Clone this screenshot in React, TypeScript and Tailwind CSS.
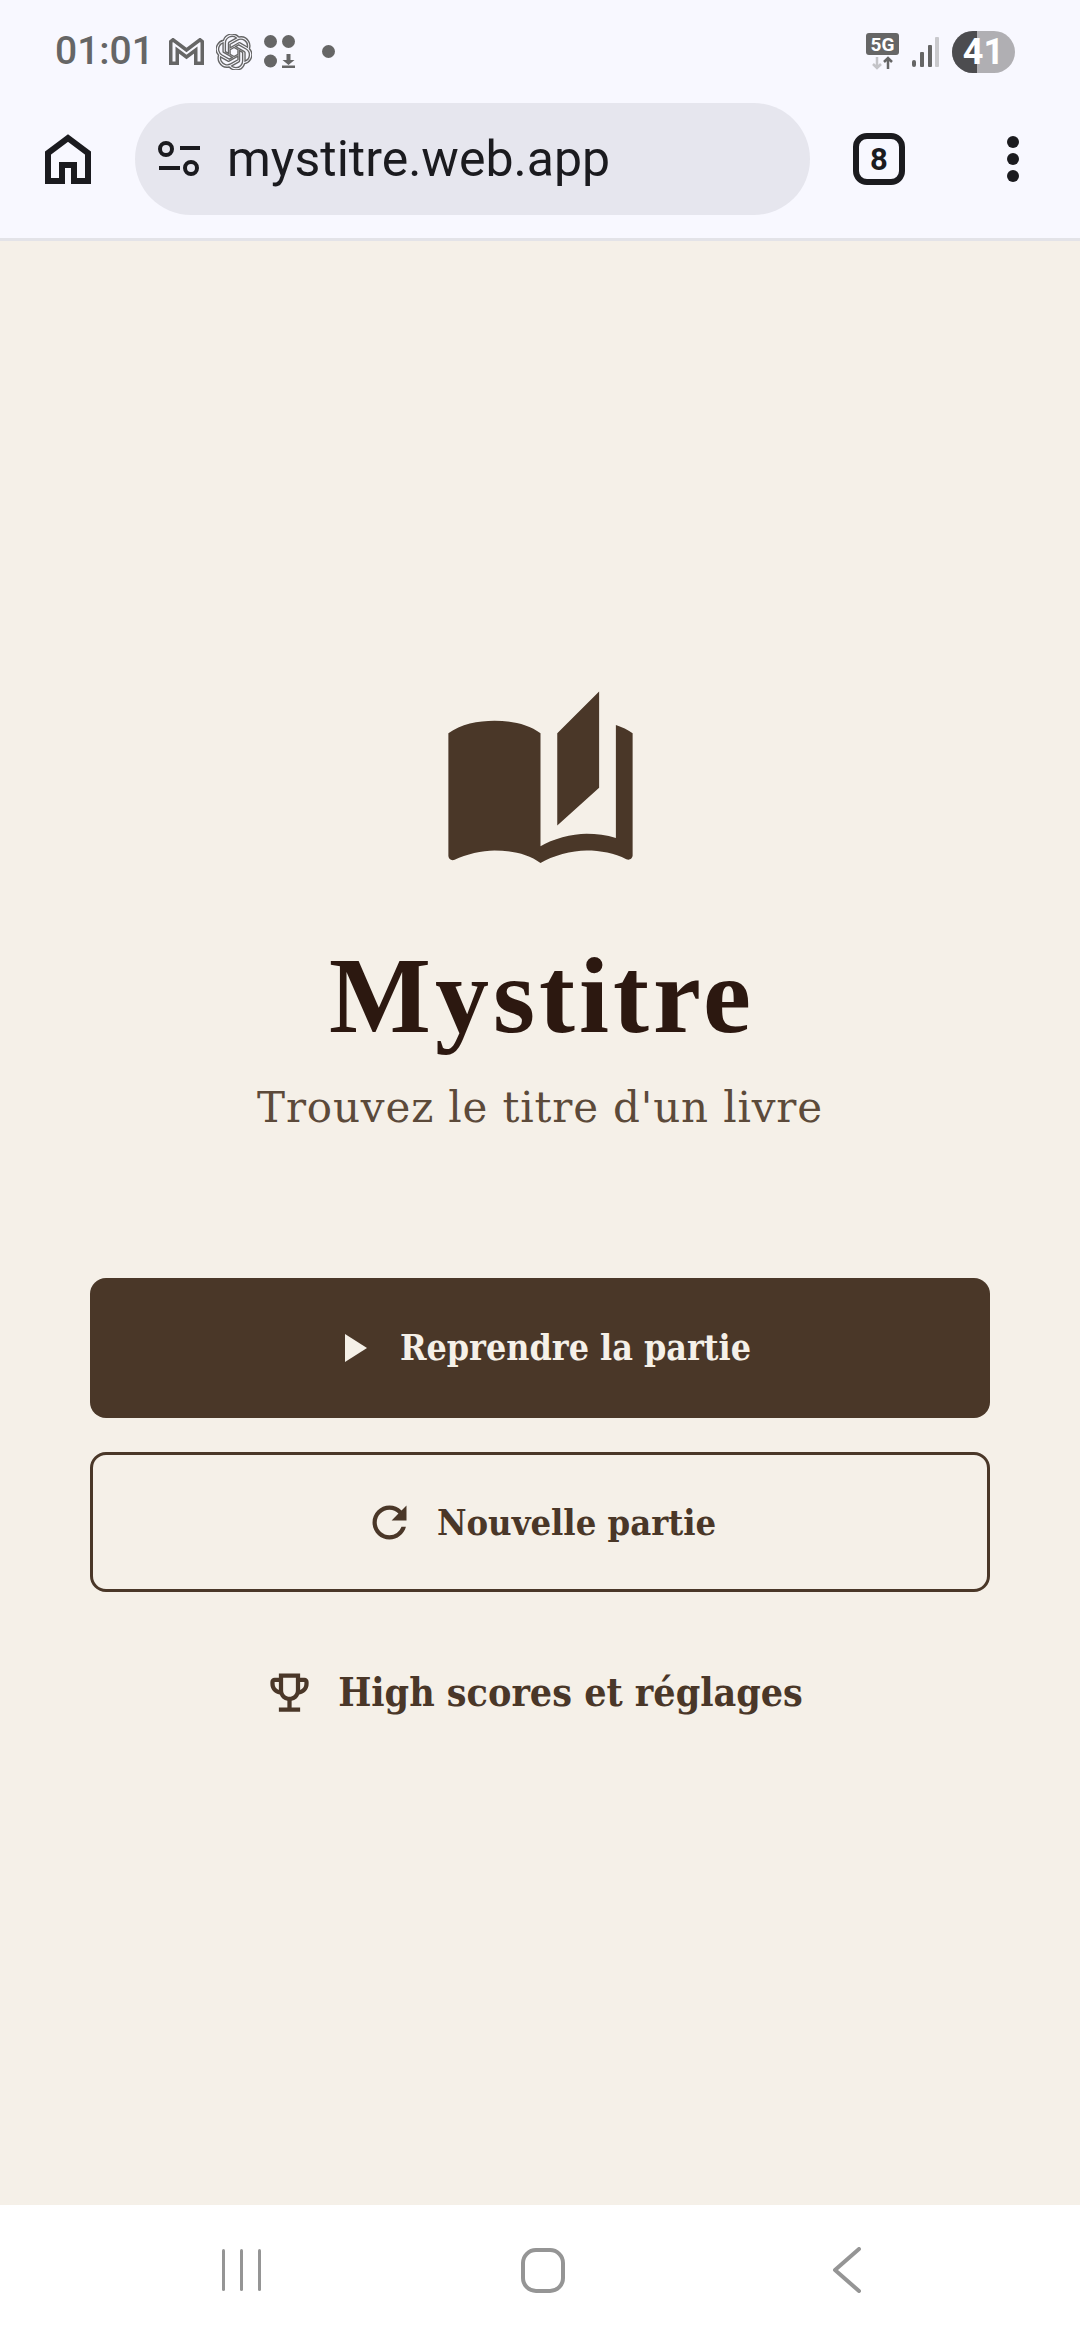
import { MdAutoStories, MdOutlineEmojiEvents, MdPlayArrow, MdRefresh } from 'react-icons/md';
import { SiOpenai } from 'react-icons/si';

function HomeIcon() {
  return (
    <svg width="46" height="50" viewBox="0 0 46 50" fill="none" stroke="#1b1b1f" strokeWidth="6">
      <path d="M3 47V19L23 4l20 15v28H29V31H17v16Z" />
    </svg>
  );
}

function TuneIcon() {
  return (
    <svg width="42" height="36" viewBox="0 0 42 36" fill="none" stroke="#1b1b1f" strokeWidth="4">
      <circle cx="8" cy="8" r="6" />
      <path d="M22 7h20M1 27h21" />
      <circle cx="33" cy="27" r="6" />
    </svg>
  );
}

function GmailIcon() {
  return (
    <svg width="35" height="27" viewBox="0 0 35 27" fill="none" stroke="#666" strokeWidth="3.5">
      <path d="M1.75 25.25V3.5L4 1.75 17.5 12 31 1.75l2.25 1.75v21.75h-6.5V12l-9.25 7-9.25-7v13.25Z" />
    </svg>
  );
}

function AppsDownloadIcon() {
  return (
    <svg width="31" height="33" viewBox="0 0 31 33" fill="#666">
      <circle cx="6.5" cy="6.5" r="6.5" />
      <circle cx="24.5" cy="6.5" r="6.5" />
      <circle cx="6.5" cy="26" r="6.5" />
      <path d="M22.5 19h4v6h4l-6 5-6-5h4Z" />
      <rect x="18" y="30.5" width="13" height="2.5" />
    </svg>
  );
}

function NetworkIcon() {
  return (
    <svg width="33" height="37" viewBox="0 0 33 37" fill="none">
      <rect width="33" height="22" rx="3" fill="#666" />
      <text x="16.5" y="18" textAnchor="middle" fill="#fff" fontSize="19" fontWeight="700" fontFamily="Roboto, sans-serif">
        5G
      </text>
      <path d="M11 24v11M7 31l4 4 4-4" stroke="#c4c4c8" strokeWidth="2.5" />
      <path d="M22 36V25M18 29l4-4 4 4" stroke="#666" strokeWidth="2.5" />
    </svg>
  );
}

function SignalIcon() {
  return (
    <svg width="27" height="30" viewBox="0 0 27 30" fill="#666">
      <rect x="0" y="23" width="4" height="7" rx="2" />
      <rect x="8" y="15" width="4" height="15" rx="1" />
      <rect x="16" y="8" width="4" height="22" rx="1" />
      <rect x="23" y="0" width="4" height="30" rx="1" fill="#c9c9cd" />
    </svg>
  );
}

export default function App() {
  return (
    <div className="flex min-h-[2340px] w-[1080px] flex-col bg-[#f5f0e8] font-['Roboto',sans-serif]">
      <header className="h-[241px] border-b-[3px] border-[#e3e3e8] bg-[#f8f8ff]">
        <div className="flex h-[103px] items-center pl-[55px] pr-[65px] text-[#666]">
          <span className="text-[39px] font-medium leading-none">01:01</span>
          <div className="ml-[15px] flex items-center gap-[12px]">
            <GmailIcon />
            <SiOpenai className="h-[36px] w-[36px] fill-none stroke-[#666] stroke-[0.9]" />
            <AppsDownloadIcon />
          </div>
          <span className="ml-[27px] h-[13px] w-[13px] rounded-full bg-[#666]" />
          <div className="ml-auto flex items-center gap-[13px]">
            <NetworkIcon />
            <SignalIcon />
            <div className="relative flex h-[42px] w-[63px] items-center justify-center overflow-hidden rounded-full bg-[#b0afb3] text-[36px] font-bold text-white">
              <span className="absolute inset-y-0 left-0 w-[25px] bg-[#4c4c4f]" />
              <span className="relative leading-none">41</span>
            </div>
          </div>
        </div>
        <div className="flex h-[112px] items-center pl-[45px]">
          <HomeIcon />
          <div className="ml-[44px] flex h-[112px] w-[675px] items-center rounded-full bg-[#e6e6ee] pl-[23px]">
            <TuneIcon />
            <span className="ml-[27px] text-[50px] leading-none text-[#1b1b1f]">mystitre.web.app</span>
          </div>
          <div className="ml-[43px] flex h-[52px] w-[52px] items-center justify-center rounded-[14px] border-[6px] border-[#1b1b1f] text-[31px] font-bold leading-none text-[#1b1b1f]">
            8
          </div>
          <div className="ml-[102px] flex flex-col gap-[5px]">
            <span className="h-[12px] w-[12px] rounded-full bg-[#1b1b1f]" />
            <span className="h-[12px] w-[12px] rounded-full bg-[#1b1b1f]" />
            <span className="h-[12px] w-[12px] rounded-full bg-[#1b1b1f]" />
          </div>
        </div>
      </header>

      <main className="flex flex-1 flex-col items-center px-[90px] pt-[442px]">
        <MdAutoStories className="h-[201px] w-[201px] text-[#4a3728]" />
        <h1 className="ml-[4px] mt-[52px] font-['Liberation_Serif',serif] text-[108px] font-bold leading-[120px] tracking-[4px] text-[#2c1810]">
          Mystitre
        </h1>
        <p className="mt-[22px] font-['DejaVu_Serif',serif] text-[42px] leading-[60px] tracking-[0.85px] text-[#5c4a3a]">
          Trouvez le titre d'un livre
        </p>
        <button className="mt-[140px] flex h-[140px] w-full items-center justify-center gap-[23px] rounded-[16px] bg-[#4a3728] font-['DejaVu_Serif_Condensed','DejaVu_Serif',serif] text-[35.5px] font-bold text-[#f5f0e8]">
          <MdPlayArrow className="h-[48px] w-[48px]" />
          Reprendre la partie
        </button>
        <button className="mt-[34px] flex h-[140px] w-full items-center justify-center gap-[22px] rounded-[16px] border-[3px] border-[#4a3728] font-['DejaVu_Serif_Condensed','DejaVu_Serif',serif] text-[36px] font-bold text-[#4a3728]">
          <MdRefresh className="h-[51px] w-[51px]" />
          Nouvelle partie
        </button>
        <button className="mr-[13px] mt-[71px] flex items-center gap-[23px] font-['DejaVu_Serif_Condensed','DejaVu_Serif',serif] text-[39px] font-bold text-[#4a3728]">
          <MdOutlineEmojiEvents className="h-[51px] w-[51px]" />
          High scores et réglages
        </button>
      </main>

      <nav className="flex h-[135px] items-center bg-white pb-[5px]">
        <div className="ml-[222px] flex gap-[15px]">
          <span className="h-[42px] w-[3px] rounded-full bg-[#959595]" />
          <span className="h-[42px] w-[3px] rounded-full bg-[#959595]" />
          <span className="h-[42px] w-[3px] rounded-full bg-[#959595]" />
        </div>
        <div className="ml-[260px] h-[45px] w-[44px] rounded-[15px] border-[4px] border-[#959595]" />
        <svg className="ml-[267px]" width="30" height="46" viewBox="0 0 30 46" fill="none" stroke="#959595" strokeWidth="4" strokeLinecap="round" strokeLinejoin="round">
          <path d="M27 2 3 23l24 21" />
        </svg>
      </nav>
    </div>
  );
}
